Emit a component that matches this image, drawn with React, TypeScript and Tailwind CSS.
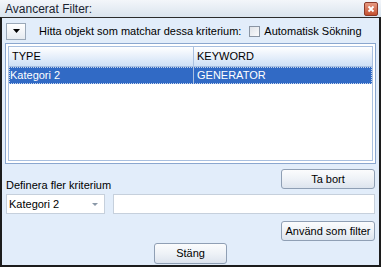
import React from "react";

const font = { fontFamily: "'Liberation Sans', Arial, sans-serif" };

function Btn({ children, className = "" }: { children: React.ReactNode; className?: string }) {
  return (
    <div
      className={
        "flex items-center justify-center whitespace-nowrap rounded-[3px] border border-[#8f9fb4] bg-gradient-to-b from-[#fbfcfd] via-[#eef2f7] to-[#dde4ee] text-[11px] text-black " +
        className
      }
    >
      {children}
    </div>
  );
}

export default function App() {
  return (
    <div className="w-[381px] h-[269px] bg-white text-black whitespace-nowrap" style={{ ...font }}>
      {/* title bar */}
      <div className="h-[17px] flex items-center justify-between bg-gradient-to-b from-[#f3f6fa] to-[#dae4ee] pl-[5px] pr-[3px]">
        <span className="text-[12px] leading-[14px] text-[#1b2533]">Avancerat Filter:</span>
        <div className="w-[14px] h-[14px] mt-[1px] rounded-[2px] border border-[#8b3a2a] bg-gradient-to-b from-[#e79a82] to-[#c4502f] flex items-center justify-center">
          <svg width="8" height="8" viewBox="0 0 8 8">
            <path d="M1.5 1.5 L6.5 6.5 M6.5 1.5 L1.5 6.5" stroke="white" strokeWidth="1.8" />
          </svg>
        </div>
      </div>
      {/* body */}
      <div className="h-[250px] border-t border-x-2 border-b-2 border-t-[#2b2b2b] border-x-[#1c1c1c] border-b-[#1c1c1c] bg-[#e2edfa] flex flex-col px-[3px]">
        {/* row 1 */}
        <div className="h-[22px] flex items-center mt-[2px]">
          <div className="ml-[1px] w-[20px] h-[17px] border border-[#9aa8b8] bg-gradient-to-b from-white to-[#e6ebf1] flex items-center justify-center">
            <svg width="7" height="4" viewBox="0 0 7 4">
              <path d="M0 0 H7 L3.5 4 Z" fill="black" />
            </svg>
          </div>
          <span className="ml-[13px] text-[11px]">Hitta objekt som matchar dessa kriterium:</span>
          <div className="ml-[8px] w-[11px] h-[11px] border border-[#8a95a3] bg-gradient-to-br from-[#dfe3e8] to-[#fbfbfc]" />
          <span className="ml-[4px] text-[11px]">Automatisk Sökning</span>
        </div>
        {/* table */}
        <div className="mt-[1px] h-[121px] border border-[#8ba7cf] bg-white p-[2px]">
          <div className="h-full border border-[#a9c0e0] flex flex-col">
            <div className="h-[20px] flex bg-gradient-to-b from-white to-[#cfe0f6] border-b border-[#a9c0e0] text-[11px]">
              <div className="w-[185px] pl-[3px] flex items-center border-r border-[#a9c0e0]">TYPE</div>
              <div className="flex-1 pl-[3px] flex items-center">KEYWORD</div>
            </div>
            <div className="h-[17px] flex bg-[#316ac5] text-white text-[11px] outline outline-1 outline-dotted outline-offset-[-1px] outline-[#c8d6ee]">
              <div className="w-[185px] pl-[1px] flex items-center border-r border-[#a9c0e0]">Kategori 2</div>
              <div className="flex-1 pl-[3px] flex items-center">GENERATOR</div>
            </div>
          </div>
        </div>
        {/* label + Ta bort */}
        <div className="h-[29px] flex justify-between">
          <span className="self-end text-[11px] leading-[13px] ml-[1px] mb-[1px]">Definera fler kriterium</span>
          <Btn className="self-start mt-[5px] mr-[1px] w-[94px] h-[20px]">Ta bort</Btn>
        </div>
        {/* combo + input */}
        <div className="h-[20px] flex mt-[1px]">
          <div className="ml-[1px] w-[99px] h-[20px] border border-[#c6d0dc] bg-white flex items-center justify-between pl-[2px] pr-[6px] text-[11px]">
            <span>Kategori 2</span>
            <svg width="6" height="3" viewBox="0 0 6 3">
              <path d="M0 0 H6 L3 3 Z" fill="#8a98a8" />
            </svg>
          </div>
          <div className="ml-[8px] mr-[1px] flex-1 h-[20px] border border-[#c6d0dc] bg-white" />
        </div>
        {/* Använd som filter */}
        <div className="flex justify-end mt-[7px]">
          <Btn className="mr-[1px] w-[94px] h-[20px]">Använd som filter</Btn>
        </div>
        <div className="flex justify-center mt-[2px]">
          <Btn className="w-[73px] h-[21px]">Stäng</Btn>
        </div>
      </div>
    </div>
  );
}
